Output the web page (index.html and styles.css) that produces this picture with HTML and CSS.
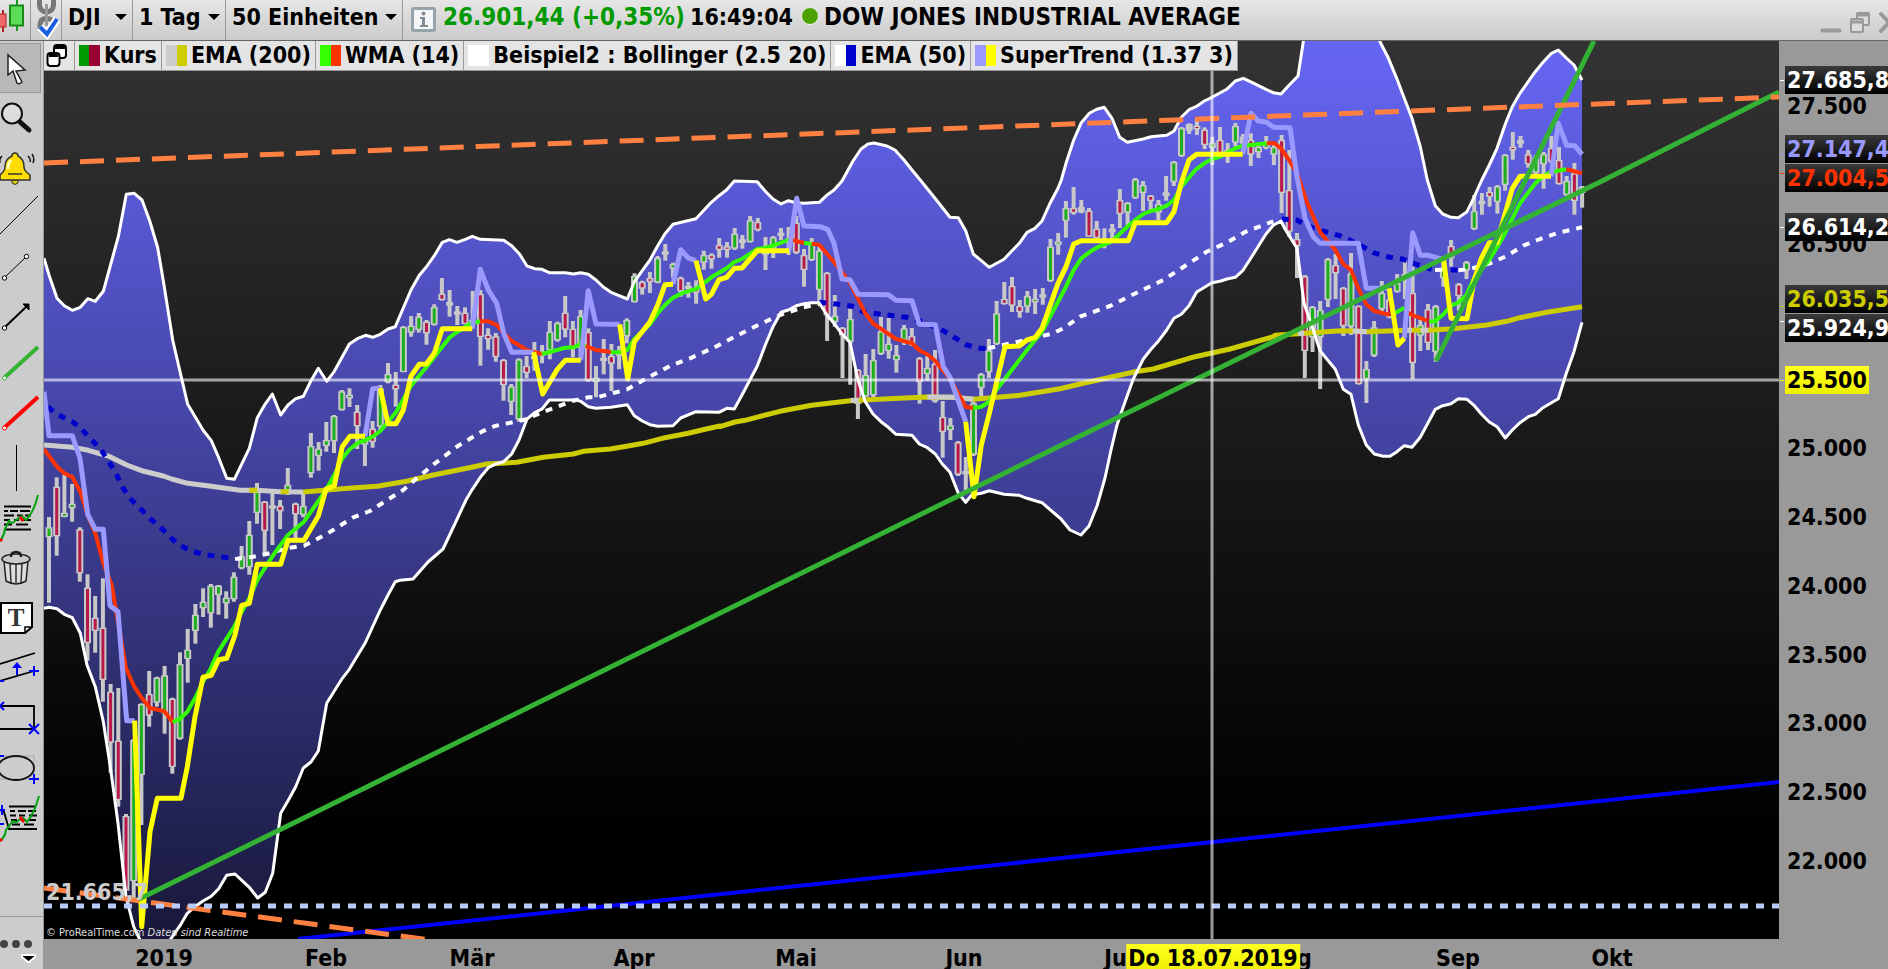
FILE: index.html
```html
<!DOCTYPE html>
<html lang="de">
<head>
<meta charset="utf-8">
<title>DJI – DOW JONES INDUSTRIAL AVERAGE</title>
<link rel="stylesheet" href="styles.css">
</head>
<body>
<header class="topbar">
  <button class="topbar-icon chart-type" aria-label="Charttyp">
    <svg width="30" height="40" viewBox="0 0 30 40"><path d="M3 10v22" stroke="#a22" stroke-width="2"/><rect x="-4" y="14" width="10" height="13" fill="#e66" stroke="#a22"/><path d="M17 0v31" stroke="#1a9a1a" stroke-width="2"/><rect x="10" y="5.500" width="13" height="20" fill="#5ade5a" stroke="#1a8a1a" stroke-width="2"/></svg>
  </button>
  <button class="topbar-icon link" aria-label="Verknüpfen">
    <svg width="31" height="40" viewBox="0 0 31 40"><g fill="none"><rect x="8.500" y="-8" width="14" height="20" rx="7" stroke="#777" stroke-width="5"/><path d="M9 29v-4q0-6 6-6.500t7 4" stroke="#777" stroke-width="5"/><path d="M15.500 4v22" stroke="#999" stroke-width="3"/><path d="M9 27l7 7 10-15" stroke="#fff" stroke-width="8"/><path d="M9 27l7 7 10-15" stroke="#1a5fe0" stroke-width="4"/></g></svg>
  </button>
  <label class="pick pick-symbol"><select aria-label="Symbol"><option>DJI</option></select></label>
  <label class="pick pick-period"><select aria-label="Periode"><option>1 Tag</option></select></label>
  <label class="pick pick-units"><select aria-label="Einheiten"><option>50 Einheiten</option></select></label>
  <button class="info" aria-label="Info"><svg width="26" height="26" viewBox="0 0 26 26"><rect x="1.500" y="1.500" width="22" height="22" rx="1" fill="#f4f6f8" stroke="#97a3ab" stroke-width="3"/><circle cx="12.500" cy="6.500" r="2" fill="#808a92"/><path d="M9 10h5v8h3v2H9v-2h2v-6H9z" fill="#808a92"/></svg></button>
  <span class="quote">26.901,44 (+0,35%)</span>
  <time class="clock">16:49:04</time>
  <span class="status"></span>
  <h1 class="title">DOW JONES INDUSTRIAL AVERAGE</h1>
  <div class="window-buttons">
    <button aria-label="Minimieren"><svg width="22" height="24" viewBox="0 0 22 24"><path d="M2.500 20.500h17" stroke="#999" stroke-width="4" stroke-linecap="round"/></svg></button>
    <button aria-label="Wiederherstellen"><svg width="22" height="24" viewBox="0 0 22 24"><g fill="#ddd" stroke="#999" stroke-width="2"><rect x="8" y="3" width="12" height="12" rx="1"/><rect x="2" y="9" width="12" height="13" rx="1"/><path d="M2 12h12M8 5h12" stroke-width="3"/></g></svg></button>
    <button aria-label="Schließen"><svg width="22" height="24" viewBox="0 0 22 24"><path d="M3 4l16 17M19 4L3 21" stroke="#999" stroke-width="4" stroke-linecap="round"/></svg></button>
  </div>
</header>

<div class="workspace">
  <nav class="tools">
    <button class="active" aria-label="Zeiger"><svg viewBox="0 0 44 50"><path d="M8 11v20l5-4 4 12q2 2 5-1l-6-11 9-1z" fill="#fff" stroke="#222" stroke-width="1.500"/></svg></button>
    <button aria-label="Lupe"><svg viewBox="0 0 44 50"><circle cx="12" cy="20.500" r="10" fill="#ddd" stroke="#111" stroke-width="2"/><path d="M20 29l9 8" stroke="#111" stroke-width="5" stroke-linecap="round"/></svg></button>
    <button aria-label="Alarm"><svg viewBox="0 0 44 50"><path d="M12 37h6v3q-3 3-6 0z" fill="#dc0" stroke="#333"/><path d="M15 10q3 0 3 3 6 3 6 11 0 4 6 8v5H0v-5q5-4 5-8 0-8 7-11 0-3 3-3z" fill="#fd0" stroke="#333" stroke-width="1.500"/><path d="M11 17q-3 3-3 9" fill="none" stroke="#ffb" stroke-width="3"/><path d="M8 31h14" stroke="#333" stroke-width="1.500"/><path d="M28 13q3 3 2 6M32 11q3 4 1 9M2 13q-3 3-2 7" fill="none" stroke="#111" stroke-width="1.500"/></svg></button>
    <button aria-label="Gerade"><svg viewBox="0 0 44 50"><path d="M0 41L38 3" stroke="#000"/></svg></button>
    <button aria-label="Strecke"><svg viewBox="0 0 44 50"><path d="M4 35L26 14" stroke="#000"/><g fill="#fff" stroke="#000"><circle cx="4.500" cy="35" r="2.200"/><circle cx="26.500" cy="13.500" r="2.200"/></g></svg></button>
    <button aria-label="Pfeil"><svg viewBox="0 0 44 50"><path d="M4 35L26 14" stroke="#000" stroke-width="2"/><path d="M23 11h6v6z" stroke="#000"/><circle cx="4.500" cy="35" r="2.200" fill="#fff" stroke="#000"/></svg></button>
    <button aria-label="Grüne Linie"><svg viewBox="0 0 44 50"><path d="M4 35L38 4" stroke="#33b233" stroke-width="4"/><circle cx="4.500" cy="35" r="2" fill="#fff" stroke="#33b233"/></svg></button>
    <button aria-label="Rote Linie"><svg viewBox="0 0 44 50"><path d="M4 35L38 4" stroke="#f00" stroke-width="4"/><circle cx="4.500" cy="35" r="2" fill="#fff" stroke="#f00"/></svg></button>
    <button aria-label="Vertikale"><svg viewBox="0 0 44 50"><path d="M16.500 2v46" stroke="#000"/></svg></button>
    <button aria-label="Fibonacci"><svg viewBox="0 0 44 50"><path d="M4 13.500h27M4 36.500h27M4 18h4m2 0h8m2 0h10M4 22.500h10m3 0h6m2 0h6M4 27h6m4 0h5m3 0h9M4 31.500h8m4 0h12" stroke="#000" stroke-width="1.800"/><path d="M0 48Q4 43 5 36L9 28q3 4 7-1l6-4 4 4q8-8 12-25" fill="none" stroke="#00a510" stroke-width="2"/><path d="M20 24l3 4M0 48l2-2" stroke="#f00" stroke-width="3"/></svg></button>
    <button aria-label="Löschen"><svg viewBox="0 0 44 50"><path d="M4 18l2 20q10 6 20 0l2-20z" fill="#ddd" stroke="#222" stroke-width="1.500"/><path d="M10 20l1 20M16 20v21M22 20l-1 20" stroke="#333" stroke-width="1.500"/><ellipse cx="16" cy="16" rx="14" ry="5" fill="#ccc" stroke="#222" stroke-width="1.500"/><path d="M11 14q0-5 5-5t5 5" fill="none" stroke="#222" stroke-width="2.500"/></svg></button>
    <button class="text-tool" aria-label="Text"><svg viewBox="0 0 44 50"><path d="M1 10h31v24l-7 6H1z" fill="#fff" stroke="#000" stroke-width="2"/><path d="M25 40v-6h7" fill="none" stroke="#000" stroke-width="1.500"/><text x="16" y="33" text-anchor="middle">T</text></svg></button>
    <button aria-label="Kanal"><svg viewBox="0 0 44 50"><path d="M0 21l35-11M0 38l34-10" stroke="#000" stroke-width="1.800"/><path d="M17 32v-8M29 28h10M34 23v10M0 38h4" stroke="#00f" stroke-width="2"/><path d="M12 25l5-6 5 6z" fill="#00f"/></svg></button>
    <button aria-label="Rechteck"><svg viewBox="0 0 44 50"><path d="M0 13h34v23H0" fill="none" stroke="#000" stroke-width="1.800"/><path d="M29 31l10 10M39 31L29 41M0 13l4-4M0 13l4 4" stroke="#00f" stroke-width="2"/></svg></button>
    <button aria-label="Ellipse"><svg viewBox="0 0 44 50"><path d="M0 13h34v23H0" fill="none" stroke="#aaa"/><ellipse cx="16" cy="25" rx="18" ry="12" fill="none" stroke="#111" stroke-width="1.800"/><path d="M29 36h10M34 31v10M0 13h4" stroke="#00f" stroke-width="2"/></svg></button>
    <button aria-label="Muster"><svg viewBox="0 0 44 50"><path d="M9 13.500h27M10 18h5m3 0h8m2 0h8M10 22.500h6m3 0h6m4 0h8M11 27h6m4 0h5m3 0h7M12 31.500h8m4 0h10M0 17l4 2 5 17h28" fill="none" stroke="#000" stroke-width="1.800"/><path d="M0 48q5-4 6-11l7-9q3 3 6-1l4-2 4 4q7-8 12-26" fill="none" stroke="#00a510" stroke-width="2"/><path d="M20 24l4 5M0 48l2-2" stroke="#f00" stroke-width="3"/><path d="M0 17h5M2 12v10M0 31h4" stroke="#00f" stroke-width="2"/></svg></button>
    <button class="more" aria-label="Mehr"><svg viewBox="0 0 44 52"><g fill="#444"><circle cx="4" cy="27" r="4"/><circle cx="16" cy="27" r="4"/><circle cx="28" cy="27" r="4"/></g><path d="M22 38h13v2l-6 5h-1l-6-5z" stroke="#fff" stroke-width="2"/></svg></button>
  </nav>

  <main class="plot">
    <svg id="chart" class="chart" viewBox="44 41 1735 898" preserveAspectRatio="none" role="img" aria-label="Dow Jones Tageschart">
      <defs>
        <linearGradient id="band-fill" gradientUnits="userSpaceOnUse" x1="0" y1="41" x2="0" y2="939">
          <stop offset="0" stop-color="#6666f5"/><stop offset="1" stop-color="#18183a"/>
        </linearGradient>
      </defs>
    </svg>
    <ul class="legend">
      <li class="legend-menu"><svg width="22" height="26" viewBox="0 0 22 26"><g fill="#fff" stroke="#000" stroke-width="2"><rect x="8" y="2" width="12" height="13" rx="3"/><path d="M9 4h10" stroke-width="4"/><rect x="1.500" y="10" width="12" height="13" rx="3"/><path d="M3 12h9" stroke-width="4"/></g></svg></li>
      <li><i class="swatch price"></i>Kurs</li>
      <li><i class="swatch ema200"></i>EMA (200)</li>
      <li><i class="swatch wma"></i>WMA (14)</li>
      <li><i class="swatch bands"></i>Beispiel2 : Bollinger (2.5 20)</li>
      <li><i class="swatch ema50"></i>EMA (50)</li>
      <li><i class="swatch trend"></i>SuperTrend (1.37 3)</li>
    </ul>
    <div class="plot-foot">
      <span class="low">21.665,7</span>
      <small class="credit">© ProRealTime.com <em>Daten sind Realtime</em></small>
    </div>
  </main>

  <aside class="prices" id="prices"></aside>
  <footer class="dates" id="dates"></footer>
</div>
<script src="script.js"></script>
</body>
</html>
```

FILE: styles.css
```css
* { box-sizing: border-box; }

body {
  margin: 0;
  height: 100vh;
  display: flex;
  flex-direction: column;
  overflow: hidden;
  background: #999;
  color: #000;
  font: bold 23px/28px "DejaVu Sans Condensed", "DejaVu Sans", sans-serif;
}

button {
  margin: 0;
  padding: 0;
  border: 0;
  background: none;
  font: inherit;
}

svg { display: block; }

/* top bar */
.topbar {
  flex: none;
  height: 41px;
  display: flex;
  align-items: stretch;
  border-bottom: 1px solid #666;
  background: linear-gradient(#e6e6e6, #cbcbcb);
  white-space: nowrap;
}
.topbar > * { line-height: 34px; }
.topbar-icon { width: 31px; border-right: 1px solid #999; overflow: hidden; }
.pick {
  display: flex;
  position: relative;
  border-right: 1px solid #999;
}
.pick select {
  appearance: none;
  border: 0;
  width: 100%;
  height: 34px;
  padding: 0 20px 0 6px;
  background: none;
  color: inherit;
  font: inherit;
  line-height: 34px;
}
.pick::after {
  content: "";
  position: absolute;
  right: 5px;
  top: 14px;
  border: 6px solid transparent;
  border-top-color: #000;
  border-bottom: 0;
}
.pick-symbol { width: 71px; }
.pick-period { width: 93px; }
.pick-units { width: 177px; }
.info { padding: 4px 6px 4px 8px; }
.quote { width: 247px; font-size: 24px; color: #009a00; }
.clock { width: 111px; }
.status {
  width: 18px;
  height: 18px;
  margin: 7px 5px 0 0;
  border: 1px solid #f5f5f5;
  border-radius: 50%;
  background: #4ca000;
}
.title { margin: 0; font-size: 24px; }
.window-buttons {
  display: flex;
  gap: 7px;
  margin: 4px -12px 0 auto;
}

/* workspace */
.workspace {
  flex: 1;
  min-height: 0;
  display: grid;
  grid-template: minmax(0, 1fr) 30px / 44px minmax(0, 1fr) 109px;
}
.tools {
  grid-row: 1 / 3;
  display: flex;
  flex-direction: column;
  padding-top: 2px;
  border-right: 1px solid #999;
  background: #ccc;
  overflow: hidden;
}
.tools button { flex: none; height: 50px; overflow: hidden; }
.tools svg { width: 44px; fill: #000; }
.tools .active {
  width: 41px;
  background: #b8b8b8;
  border: 1px solid #999;
  border-left: 0;
}
.text-tool text { font: bold 25px "Liberation Serif", serif; fill: #333; }
.tools .more { height: 53px; margin-top: auto; border-top: 1px solid #999; }

.plot {
  position: relative;
  background: linear-gradient(#333, #000 88%);
  overflow: hidden;
}
.chart { width: 100%; height: 100%; fill: none; stroke-linejoin: round; }
.band { fill: url(#band-fill); }
.boll { stroke: #fff; stroke-width: 3; }
.wick { stroke: #c8c8c8; stroke-width: 4; }
.body { stroke: #c8c8c8; stroke-width: 7; }
.up { stroke: #1bb01b; stroke-width: 3; }
.down { stroke: #b8184a; stroke-width: 3; }
.grey { stroke: #ccc; stroke-width: 5; }
.olive { stroke: #cc0; stroke-width: 5; }
.red { stroke: #f30; stroke-width: 4; }
.lime { stroke: #3f0; stroke-width: 4; }
.navy { stroke: #00c; stroke-width: 5; stroke-dasharray: 7 7; }
.white { stroke: #fff; stroke-width: 4; stroke-dasharray: 7 7; }
.lilac { stroke: #99f; stroke-width: 5; }
.yellow { stroke: #ff0; stroke-width: 5; }
.green { stroke: #33b233; stroke-width: 5; }
.orange { stroke: #ff8040; stroke-width: 5; stroke-dasharray: 24 12; }
.blue { stroke: #00f; stroke-width: 4; }
.dots { stroke: #b8ccff; stroke-width: 5; stroke-dasharray: 8 8; }
.cross { stroke: #fff; stroke-opacity: .6; stroke-width: 3; }

.legend {
  position: absolute;
  top: 0;
  left: 0;
  display: flex;
  margin: 0;
  padding: 0;
  list-style: none;
  border-bottom: 1px solid #999;
  background: #e4e4e4;
  line-height: 29px;
  white-space: nowrap;
}
.legend li {
  display: flex;
  align-items: center;
  gap: 4px;
  padding: 0 4px;
  border-right: 1px solid #999;
}
.legend .legend-menu { padding: 0 6px 0 2px; }
.swatch { width: 21px; height: 21px; }
.swatch.price { background: linear-gradient(90deg, #009a00 50%, #903 50%); }
.swatch.ema200 { background: linear-gradient(90deg, #ccc 50%, #cc0 50%); }
.swatch.wma { background: linear-gradient(90deg, #3f0 50%, #f30 50%); }
.swatch.bands { background: #fff; }
.swatch.ema50 { background: linear-gradient(90deg, #fff 50%, #00c 50%); }
.swatch.trend { background: linear-gradient(90deg, #99f 50%, #ff0 50%); }

.plot-foot {
  position: absolute;
  left: 2px;
  bottom: 0;
  display: flex;
  flex-direction: column;
  gap: 21px;
  color: #ccc;
}
.credit { font: 11px/12px "DejaVu Sans Condensed", sans-serif; color: #ddd; }

/* scales */
.prices { position: relative; overflow: hidden; }
.prices span {
  position: absolute;
  left: 6px;
  padding: 0 2px;
  transform: translateY(-50%);
}
.prices .tag { background: linear-gradient(#3a3a3a, #000); color: #fff; }
.prices .cursor, .dates .cursor { background: linear-gradient(#ff2, #ee0); }
.prices .c-lilac { color: #99f; }
.prices .c-red { color: #f30; }
.prices .c-olive { color: #cc0; }
.prices i { position: absolute; left: 1px; width: 4px; height: 1px; background: currentColor; }
.dates { grid-column: 2 / 4; position: relative; overflow: hidden; }
.dates span { position: absolute; top: 5px; line-height: 28px; transform: translateX(-50%); white-space: nowrap; }
.dates .cursor { padding: 0 2px; }
```

FILE: script.js
```js
// Origins of the data tiles. Tile points are thirds of a chart unit; tile Z holds plain chart units.
const TILES = { A: [40, 180, 3], B: [40, 560, 3], C: [380, 160, 3], D: [720, 180, 3], E: [1040, 80, 3], F: [1240, 40, 3], Z: [0, 0, 1] };
const chart = document.getElementById('chart');

function points(text) {
  let tile = TILES.Z;
  const out = [];
  for (const word of text.trim().split(/\s+/)) {
    if (TILES[word]) { tile = TILES[word]; continue; }
    const [x, y] = word.split(',').map(Number);
    out.push([(tile[0] + x / tile[2]).toFixed(1), (tile[1] + y / tile[2]).toFixed(1)]);
  }
  return out;
}
function add(cls, d) {
  const p = document.createElementNS('http://www.w3.org/2000/svg', 'path');
  p.setAttribute('class', cls);
  p.setAttribute('d', d);
  chart.append(p);
}
const path = pts => 'M' + pts.map(p => p.join(' ')).join('L');
const line = (cls, text) => add(cls, path(points(text)));

const upper = points(`A 12,235 27,285 51,355 73,377 97,391 121,382 143,356 166,364 190,334 235,170 259,43 283,40 306,60 330,125 353,203 372,315 398,480 420,575 443,673 489,750 514,782 536,833 560,895 583,898 628,805 652,713 675,673 697,642 722,705 744,675 767,656 790,649 813,602 835,565 860,604 883,574 928,492 952,476 977,466 998,472 1021,463 1044,447 1066,440
C 93,390 118,346 139,321 163,287 187,247 208,239 231,247 256,238 277,229 301,238 371,241 395,257 418,281 441,318 464,326 486,328 508,338 556,338 580,342 602,338 625,343 648,360 670,381 693,397 742,417 763,365 787,332 810,300 833,257 855,221 879,193 948,176 994,127 1017,107 1040,89
D 43,3 112,5 136,34 159,57 183,72 205,62 229,68 252,70 298,67 320,46 342,30 366,3
Z 853,161 861,149 868,144 874,143 887,146 895,150 904,160 912,170
D 605,5 645,55 690,112 715,113 737,152 760,222 784,242 808,262 852,238 876,212 898,190 921,157 945,145 966,123 990,70 1014,25
E 64,300 78,250 101,180 124,128 148,100 170,88 193,82 216,115 239,172 262,187 310,177 333,170 380,166 402,153 424,112 447,89 468,80 493,63 516,52 560,28 586,3 610,-5 631,5 654,16 678,28 700,38
F 123,162 147,136 174,108 190,5 200,-60 395,-60 420,5 443,50 470,115 491,170 516,235 541,320 562,420 586,497 608,522 633,532 655,533 681,515 702,472 724,423 748,375 771,325 796,252 817,200 840,160 886,95 909,67 933,41 955,30 979,54 1002,75 1026,120`);
const lower = points(`B 12,145 27,142 51,146 73,163 97,173 121,220 141,315 166,380 190,485 211,620 234,790 258,1010 281,1100 300,1140 345,1200 390,1140 420,1097 442,1060 465,1040 489,1023 514,1009 536,986 560,946 585,942 628,982 653,1014 676,997 698,940 722,760 744,722 767,680 790,624 813,606 835,573 860,430 883,393 907,355 928,328 975,250 998,200 1021,150 1044,105 1066,65 1080,61
Z 413,579 428,562 443,549 452,530
C 258,1020 277,988 301,952 325,923 349,911 371,905 395,882 417,840 441,777 464,758 486,747 508,720 590,720 604,725 625,740 648,745 693,742 742,734 763,767 787,783 810,794 833,799 879,797 902,774 948,755 1017,757 1040,745
D 43,687 66,645 112,558 136,495 159,440 183,397 205,390 229,377 252,371 274,368 297,368 321,405 342,430 366,462 390,487 414,600 436,665 459,702 483,725 505,742 528,763 576,766 598,792 622,803 646,822 667,852 690,877 715,940 737,967 755,945 784,940 808,932 852,943 898,946 921,955 966,968
Z 1061,519 1070,530 1081,535 1089,526 1097,506 1105,478 1111,450 1117,425 1125,402
E 280,897 310,837 333,808 356,782 380,750 402,715 424,703 447,677 470,636 516,608 540,604 561,597 586,592 608,572 631,537 654,500 678,462 700,436 723,423 735,447 771,505 792,670 816,738
F 240,932 286,988 310,1048 333,1063 355,1155 379,1215 403,1242 430,1249 450,1249 471,1235 493,1217 516,1222 541,1192 586,1108 608,1097 633,1091 655,1076 681,1078 702,1096 724,1122 748,1146 771,1160 796,1194 817,1170 840,1148 865,1130 886,1123 909,1103 955,1076 979,1000 1002,935 1026,847`);
add('band', path(upper.concat([...lower].reverse())) + 'Z');

// Candles per tile row: high, low, open/close top, bottom, kind (g up, r down, d doji)
const STEP = 7.704;
const candles = (first, top, text) => text.trim().split(/\s*;\s*/).forEach((row, n) => {
  const [h, l, a, b, kind] = row.split(' ');
  const x = (49 + STEP * (first + n)).toFixed(1);
  const y = v => (top + v / 3).toFixed(1);
  add('wick', `M${x} ${y(h)}V${y(l)}`);
  add('body', `M${x} ${y(a - 4)}V${y(+b + 4)}`);
  if (kind !== 'd') add(kind === 'g' ? 'up' : 'down', `M${x} ${y(a)}V${y(b)}`);
});
candles(0, 180, `1011 1268 1046 1068 g;892 1127 924 1065 r;885 1012 1002 1007 g;912 1025 975 981 g;1042 1205 1052 1176 r;1183 1442 1227 1385 r;1248 1418 1317 1349 r;1195 1565 1347 1496 r;1512 1778 1539 1684 r;1524 1880 1686 1856 r;1902 2130 1912 2128 r;1677 2155 1684 2100 g;1570 1935 1576 1781 g;1473 1640 1546 1603 r;1490 1580 1497 1564 g;1458 1661 1490 1596 g;1553 1781 1560 1757 r;1417 1679 1456 1672 g;1347 1508 1413 1433 g;1272 1391 1308 1349 g;1225 1311 1269 1281 g;1212 1343 1221 1296 g;1215 1304 1221 1241 g;1234 1316 1257 1266 g;1177 1265 1194 1254 g;1098 1168 1133 1161 g;1023 1184 1068 1158 g;909 1031 939 995 g;963 1127 969 1049 r;935 1095 980 982 d;960 1047 981 990 r;864 945 918 927 g;968 1085 975 999 r;935 1012 982 1001 g;759 893 802 876 g;786 872 810 824 g;726 815 784 794 g;705 819 712 780 g;630 692 638 686 g;625 681 648 651 g;675 807 699 735 r;780 858 785 790 g;723 803 750 782 r;615 750 630 736 g;549 610 586 603 g;576 680 618 624 r`);
candles(46, 160, `498 637 505 632 g;468 530 501 514 g;459 518 474 506 g;480 554 489 516 r;433 497 445 490 g;354 422 405 416 r;390 470 430 433 d;438 495 458 460 d;442 493 462 488 r;393 500 483 487 d;390 617 406 527 r;505 569 528 534 r;519 605 533 587 r;597 722 604 671 r;672 765 683 722 g;595 785 602 774 g;588 655 622 635 r;546 632 592 594 d;555 610 579 583 r;483 598 519 567 g;485 545 493 537 g;408 532 462 505 r;483 592 510 560 r;450 590 472 560 g;505 665 520 658 r;618 712 657 662 g;537 643 597 599 d;552 693 592 607 r;558 628 582 584 d;475 550 484 525 g;340 428 352 422 g;362 404 370 382 r;336 399 358 362 r;288 370 298 364 g;252 302 278 280 d;308 353 316 322 g;350 410 358 390 r;366 413 381 383 d;361 431 387 394 r;272 329 289 304 g;280 326 289 294 r;234 293 259 266 r;246 293 263 266 r;204 270 225 262 g`);
candles(90, 180, `165 206 182 185 d;108 188 125 182 g;114 154 130 146 r;171 270 218 220 d;168 234 176 202 g;144 180 162 164 d;141 225 180 183 d;108 222 132 214 r;207 320 229 266 r;174 243 194 236 g;200 365 216 326 g;276 483 283 402 r;345 440 411 422 g;441 594 448 462 r;387 614 421 482 g;567 717 574 668 r;522 650 589 646 g;507 652 544 642 g;411 525 458 518 g;414 536 495 509 g;495 578 529 537 g;435 495 449 476 g;444 498 472 490 r;531 671 539 602 r;528 602 568 578 g;510 668 556 660 r;663 833 715 752 r;714 780 740 746 g;783 888 791 880 r;831 940 877 879 d;665 828 674 820 g;579 650 587 620 g;477 594 515 573 g;363 495 404 488 g;306 374 361 368 r;291 396 322 373 r;360 413 382 392 r;333 398 352 376 g;327 402 360 363 g;324 374 347 349 d;177 306 204 299 g;159 224 188 191 g;63 173 88 119 g;21 104 88 95 r`);
candles(134, 80, `360 400 385 393 d;384 470 396 466 r;423 475 450 470 r;445 505 481 484 d;432 478 450 453 d;327 444 364 398 r;366 435 373 394 g;294 357 302 350 g;303 393 319 335 g;345 390 351 359 r;360 420 376 394 g;288 362 341 344 d;243 318 250 302 g;141 231 148 224 g;130 162 136 148 d;117 165 141 144 r;142 207 153 191 r;170 255 192 200 g;141 220 184 215 r;189 249 213 215 d;129 200 142 184 g;162 195 174 187 d;160 258 184 220 r;198 234 205 213 g;168 208 192 200 g;195 255 205 220 g;165 399 184 335 r;210 470 334 451 r;459 594 481 494 r`);
candles(163, 40, `705 1014 713 929 r;798 936 805 888 g;783 1047 814 888 g;654 801 662 776 g;642 777 679 696 r;741 888 748 854 r;639 885 704 856 g;796 1034 802 1028 r;963 1089 991 1013 g;843 951 866 943 g;723 820 763 803 g;745 835 783 828 r;702 758 733 751 g;660 777 706 709 d;680 1018 763 965 r;840 933 859 883 g;792 930 812 905 r;795 965 803 932 g;655 740 694 710 g;600 680 622 651 r;729 812 737 764 r;663 717 671 687 g;465 570 517 563 g;459 524 486 489 d;441 500 460 467 r;435 521 443 482 g;342 452 349 431 g;276 359 324 327 r;288 323 304 307 d;330 383 347 369 r;345 410 355 394 g;336 446 346 369 g;288 370 328 361 r;321 434 364 428 r;408 468 427 461 g;369 524 404 479 r;438 503 444 455 d`);

// EMA 200
line('grey', 'A 12,795 97,802 145,811 210,830 260,855 305,872 370,888 395,897 443,910 514,919 600,931 650,931 720,935 790,936');
line('olive', 'A 628,931 652,931');
line('olive', 'A 722,935 746,935');
line('olive', 'A 790,936 925,925 1021,918 C 0,977 80,964 160,945 275,922 320,912 410,907 490,892 580,882 610,874 690,867 740,859 790,850 855,833 925,820 975,808 1020,798 D 0,740 45,726 75,721 180,694 275,676 390,662 490,657 620,651 700,652 760,658 900,646 1020,626 1080,612 E 285,875 340,867 465,830 570,807 700,770 F 105,886 175,881 300,872 340,873 380,875 500,871 565,871 640,866 740,855 800,844 840,833 920,817 1026,800');
for (const s of ['D 392,661 416,661', 'D 622,651 700,652 760,658', 'F 174,881 193,880', 'F 338,873 380,875', 'F 500,871 516,871', 'F 542,871 565,871']) line('grey', s);

// EMA 50
line('navy', 'A 24,680 50,703 97,725 121,742 145,770 180,805 200,835 225,875 250,925 270,955 330,1015 370,1050 410,1090 450,1112 490,1123 590,1137');
line('white', 'A 585,1137 635,1131 680,1122 740,1105 792,1097 860,1062 940,1012 990,993 C 25,1018 70,990 110,955 165,910 235,857 305,815 345,798 430,780 500,752 580,722 625,712 650,712 700,699 742,688 800,655 870,618 930,595 1000,564 D 15,485 65,460 110,437 180,405 250,382 298,372');
line('navy', 'D 298,367 350,372 395,378 430,395 500,405 560,412 600,422 670,452 740,495 780,505 805,506');
line('white', 'D 805,505 860,493 940,475 1000,460 E 70,745 120,710 210,678 290,638 370,600 450,548 500,515 560,488 615,456 700,424');
line('navy', 'E 725,417 770,420 820,445 F 300,587 360,615 400,638 450,652 490,658 535,675 575,688');
line('white', 'F 585,690 625,688');
line('navy', 'F 632,689 655,691');
line('white', 'F 655,691 690,687 750,670 800,648 850,617 900,597 960,577 1026,562');

add('boll', path(upper));
add('boll', path(lower));

// WMA 14
line('red', 'A 12,808 51,860 73,880 97,891 121,935 145,1010 166,1060 190,1150 B 215,75 235,190 258,325 283,380 306,415 330,444 373,454 398,487');
line('lime', 'B 398,487 420,476 442,455 465,415 489,365 510,330 535,275 583,200 605,155 628,115 A 652,1200 700,1125 744,1065 792,1025 858,930 883,885 907,835 930,807 952,790 998,770 1021,753 C 48,757 93,677 140,620 208,533 231,516 256,500 277,488 301,484');
line('red', 'C 301,484 325,484 350,495 371,520 395,543 418,556 441,571 486,582');
line('lime', 'C 486,582 556,563 582,562 600,553 617,558');
line('red', 'C 617,558 648,570 693,576');
line('lime', 'C 693,577 720,577 742,570 763,537 810,493 833,460 855,435 879,413 902,401 950,386 994,352 1040,325 1063,306 D 66,237 112,207 136,203 159,197 205,180 218,180');
line('red', 'D 218,180 252,189');
line('lime', 'D 252,189 275,191');
line('red', 'D 275,191 298,194 342,246 390,308 436,400 459,430 528,477 576,490 600,512 622,523 646,543 690,596 737,680 760,684');
line('lime', 'D 760,684 784,680 808,665 829,630 875,570 921,510 966,455 990,410 E 78,620 101,570 124,535 148,517 170,503 216,484 262,440 286,420 310,402 333,393 356,387 380,377 402,360 424,320 468,268 493,250 516,237 540,230 586,205 610,197 680,190');
line('red', 'E 680,190 703,189 725,208 747,240 771,280 F 200,485 241,577 262,602 286,630 310,672 333,690 355,745 379,793 403,813 448,824');
line('lime', 'F 455,825 493,803');
line('red', 'F 505,818 516,825 562,842');
line('lime', 'F 568,845 586,843 608,825 633,797 655,788 679,766 702,715 748,660 790,590 840,490 886,430 909,408 933,396 979,388');
line('red', 'F 979,388 1026,400');

// SuperTrend
line('lilac', 'A 12,635 27,767 97,767 120,835 143,1003 166,1048 190,1048 B 210,137 234,155 260,482 284,482');
line('lilac', 'A 975,769 998,626 1021,625');
line('lilac', 'C 277,506 301,328 325,390 350,430 371,520 395,577 461,577');
line('lilac', 'C 602,601 625,392 648,492 719,493');
line('lilac', 'C 879,373 902,269 925,294 948,302');
line('lilac', 'D 207,212 230,55 252,138 300,140 323,148 342,190 366,297 390,299 414,343 505,344 528,361 576,362 598,433 646,434 670,560 690,592 737,725');
line('lilac', 'E 608,223 633,100 655,123 678,126 702,142 750,143 771,290 795,415 820,470 F 240,610 355,610 379,745 448,745');
line('lilac', 'F 493,895 518,578 541,646 565,646 608,658');
line('lilac', 'F 933,409 955,250 980,316 1004,317 1026,343');
line('yellow', 'B 284,482 305,1100 330,815 352,715 423,715 442,620 465,470 489,352 514,346 536,299 560,295 585,225 605,136 628,130 652,13 A 722,1153 744,1081 792,1081 835,1008 858,927 883,917 907,800 930,769 975,769');
line('yellow', 'A 1021,625 1044,731 1068,731 C 70,750 93,648 118,613 139,612 163,580 187,506 277,506');
line('yellow', 'C 461,577 488,702 532,628 556,601 602,601');
line('yellow', 'C 719,493 743,657 763,545 810,485 833,435 855,374 879,373');
line('yellow', 'C 948,302 977,417 994,403 1017,359 1040,352 1063,325 D 66,264 112,212 207,212');
line('yellow', 'D 737,725 762,950 784,795 808,700 855,500 898,498 921,480 945,473 966,445 1014,310 E 78,560 101,492 124,482 265,482 286,428 380,428 402,395 424,308 447,240 470,223 608,223');
line('yellow', 'F 448,745 474,915 493,895');
line('yellow', 'F 611,660 633,835 681,836 702,722 724,655 748,608 771,608 796,520 817,445 840,409 933,409');

// Drawn lines and crosshair
line('blue', '298,939 1779,782');
line('green', '135,901 1080,436 1600,182 1779,92');
line('green', '1436,361 1594,41');
line('orange', '44,163 1779,97');
line('orange', '44,888 430,940');
line('dots', '44,906 1779,906');
line('cross', '1212,41 1212,939');
line('cross', '44,380 1779,380');

// Scales
const prices = document.getElementById('prices');
const yPct = y => (y - 41) / 898 * 100 + '%';
function price(y, text, cls = '', tick) {
  const s = document.createElement('span');
  s.className = cls;
  s.textContent = text;
  s.style.top = yPct(y);
  prices.append(s);
  if (tick) {
    const t = document.createElement('i');
    t.className = cls.replace('tag', '');
    t.style.top = yPct(tick);
    if (cls === 'tag') t.style.color = '#fff';
    prices.append(t);
  }
}
[[106, '27.500'], [244, '26.500'], [448, '25.000'], [517, '24.500'], [586, '24.000'], [655, '23.500'], [723, '23.000'], [792, '22.500'], [861, '22.000']].forEach(([y, t]) => price(y, t));
price(80, '27.685,8', 'tag', 80);
price(149, '27.147,4', 'tag c-lilac', 154);
price(178, '27.004,5', 'tag c-red', 173);
price(227, '26.614,2', 'tag', 227);
price(299, '26.035,5', 'tag c-olive', 306);
price(328, '25.924,9', 'tag', 321);
price(380, '25.500', 'cursor', 380);

const dates = document.getElementById('dates');
[[164, '2019'], [326, 'Feb'], [472, 'Mär'], [634, 'Apr'], [796, 'Mai'], [964, 'Jun'], [1119, 'Jul'], [1289, 'Aug'], [1458, 'Sep'], [1612, 'Okt'], [1213, 'Do 18.07.2019', 'cursor']].forEach(([x, t, cls]) => {
  const s = document.createElement('span');
  s.textContent = t;
  if (cls) s.className = cls;
  s.style.left = (x - 44) / 1844 * 100 + '%';
  dates.append(s);
});
```
